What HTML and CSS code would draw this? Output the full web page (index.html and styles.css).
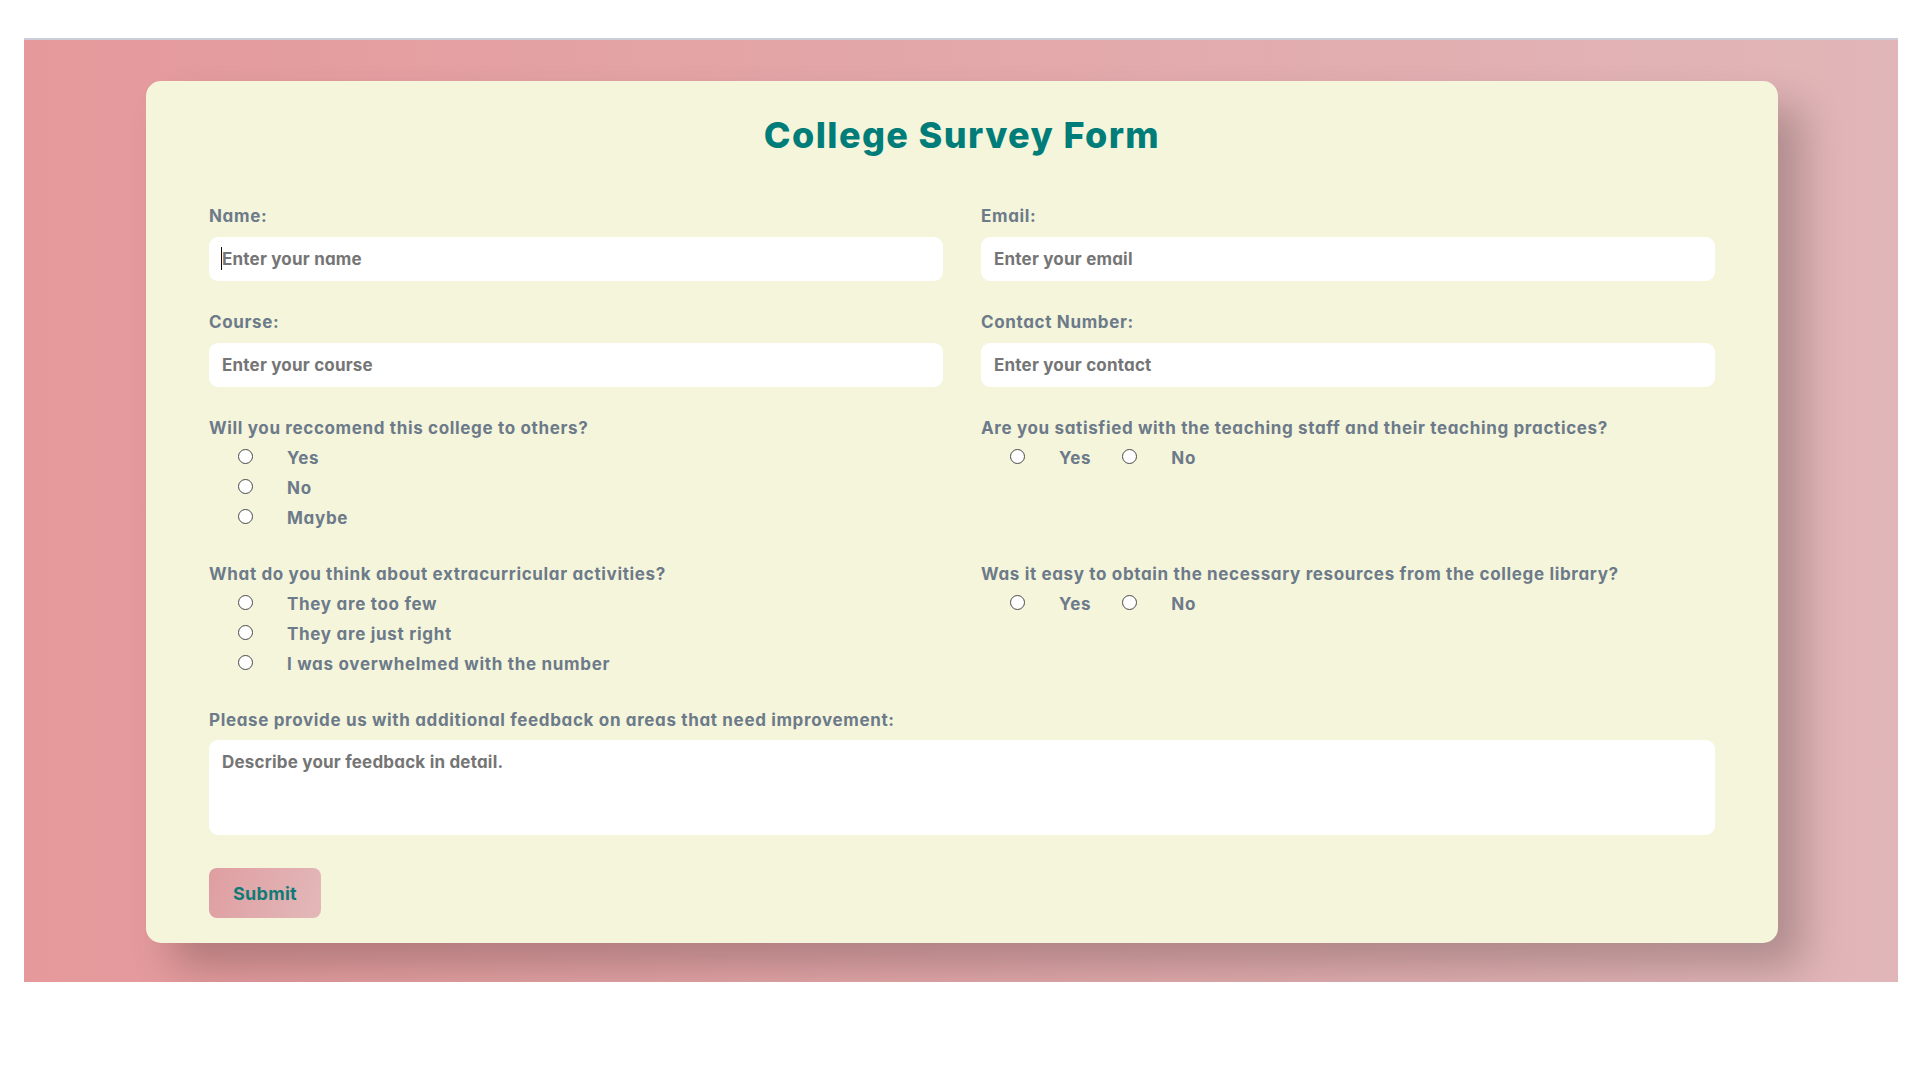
FILE: index.html
```html
<!DOCTYPE html>
<html lang="en">
<head>
<meta charset="utf-8">
<title>College Survey Form</title>
<link rel="stylesheet" href="styles.css">
</head>
<body>
<div class="page">
  <div class="card">
    <h1 class="title">College Survey Form</h1>
    <form class="form">
      <div class="field">
        <label class="field-label" for="name">Name:</label>
        <div class="input-wrap">
          <input class="text-input" id="name" type="text" placeholder="Enter your name">
          <span class="caret"></span>
        </div>
      </div>
      <div class="field">
        <label class="field-label" for="email">Email:</label>
        <input class="text-input" id="email" type="email" placeholder="Enter your email">
      </div>
      <div class="field">
        <label class="field-label" for="course">Course:</label>
        <input class="text-input" id="course" type="text" placeholder="Enter your course">
      </div>
      <div class="field">
        <label class="field-label" for="contact">Contact Number:</label>
        <input class="text-input" id="contact" type="tel" placeholder="Enter your contact">
      </div>

      <div class="field radio-field">
        <div class="field-label q">Will you reccomend this college to others?</div>
        <label class="option"><input class="radio" type="radio" name="recommend"><span>Yes</span></label>
        <label class="option"><input class="radio" type="radio" name="recommend"><span>No</span></label>
        <label class="option"><input class="radio" type="radio" name="recommend"><span>Maybe</span></label>
      </div>
      <div class="field radio-field">
        <div class="field-label q">Are you satisfied with the teaching staff and their teaching practices?</div>
        <div class="inline-options">
          <label class="option"><input class="radio" type="radio" name="staff"><span>Yes</span></label>
          <label class="option"><input class="radio" type="radio" name="staff"><span>No</span></label>
        </div>
      </div>

      <div class="field radio-field">
        <div class="field-label q">What do you think about extracurricular activities?</div>
        <label class="option"><input class="radio" type="radio" name="extra"><span>They are too few</span></label>
        <label class="option"><input class="radio" type="radio" name="extra"><span>They are just right</span></label>
        <label class="option"><input class="radio" type="radio" name="extra"><span>I was overwhelmed with the number</span></label>
      </div>
      <div class="field radio-field">
        <div class="field-label q">Was it easy to obtain the necessary resources from the college library?</div>
        <div class="inline-options">
          <label class="option"><input class="radio" type="radio" name="library"><span>Yes</span></label>
          <label class="option"><input class="radio" type="radio" name="library"><span>No</span></label>
        </div>
      </div>

      <div class="field full">
        <label class="field-label fb-label" for="feedback">Please provide us with additional feedback on areas that need improvement:</label>
        <textarea class="textarea" id="feedback" placeholder="Describe your feedback in detail."></textarea>
        <button class="submit" type="button">Submit</button>
      </div>
    </form>
  </div>
</div>
</body>
</html>
```
FILE: styles.css
```css
html, body {
  background: #ffffff;
}
body {
  margin: 38px 22px 0 24px;
  font-family: "Inter", "Noto Sans", sans-serif;
  font-feature-settings: "cv11" 1;
}
.page {
  border-top: 2px solid #cbcdd8;
  background: linear-gradient(to right, #e5999b, #e1b6b8);
  padding: 41px 0 39px;
  overflow: hidden;
}
.card {
  box-sizing: border-box;
  width: 1632px;
  margin-left: 122px;
  background: #f5f5dc;
  border-radius: 15px;
  padding: 29px 63px 25px;
  box-shadow: 25px 25px 40px rgba(0, 0, 0, 0.22);
}
.title {
  margin: 0 0 43px;
  font-size: 36px;
  line-height: 50px;
  font-weight: 800;
  letter-spacing: 1.4px;
  text-align: center;
  color: #007d79;
}
.form {
  display: grid;
  grid-template-columns: 1fr 1fr;
  column-gap: 38px;
  row-gap: 28px;
}
.field {
  display: flex;
  flex-direction: column;
}
.field-label {
  display: block;
  font-size: 17px;
  line-height: 26px;
  font-weight: 700;
  letter-spacing: 0.65px;
  color: #6c7a89;
  margin-bottom: 8px;
}
.field-label.q {
  margin-bottom: 0;
}
.input-wrap {
  position: relative;
}
.caret {
  position: absolute;
  left: 12px;
  top: 10px;
  width: 1px;
  height: 23px;
  background: #111;
}
.text-input {
  box-sizing: border-box;
  width: 100%;
  height: 44px;
  border: none;
  border-radius: 9px;
  padding: 0 13px;
  background: #ffffff;
  font-family: inherit;
  font-feature-settings: "cv11" 1;
  font-size: 17px;
  font-weight: 700;
  letter-spacing: 0.2px;
  color: #333;
  outline: none;
}
.text-input::placeholder,
.textarea::placeholder {
  color: #757575;
  opacity: 1;
}
.radio-field {
  padding-bottom: 2px;
}
.option {
  display: flex;
  align-items: center;
  height: 30px;
  font-size: 17px;
  font-weight: 700;
  letter-spacing: 0.7px;
  color: #6c7a89;
}
.option span {
  padding-top: 4px;
}
.inline-options {
  display: flex;
  gap: 2px;
}
.radio {
  appearance: none;
  -webkit-appearance: none;
  box-sizing: border-box;
  width: 15px;
  height: 15px;
  margin: 0 34px 0 29px;
  border: 1px solid #4a4a4a;
  border-radius: 50%;
  background: #ffffff;
  flex: none;
}
.full {
  grid-column: 1 / -1;
}
.fb-label {
  margin-bottom: 7px;
}
.textarea {
  box-sizing: border-box;
  width: 100%;
  height: 95px;
  border: none;
  border-radius: 9px;
  padding: 9px 13px;
  background: #ffffff;
  font-family: inherit;
  font-feature-settings: "cv11" 1;
  font-size: 17px;
  line-height: 26px;
  font-weight: 700;
  letter-spacing: 0.2px;
  resize: none;
  outline: none;
  display: block;
}
.submit {
  margin-top: 33px;
  align-self: flex-start;
  width: 112px;
  height: 50px;
  border: none;
  border-radius: 8px;
  background: linear-gradient(110deg, #df9ea1, #e3b8b9);
  color: #0f7b77;
  font-family: inherit;
  font-feature-settings: "cv11" 1;
  font-size: 18px;
  font-weight: 700;
  letter-spacing: 0.3px;
  cursor: pointer;
}
```
